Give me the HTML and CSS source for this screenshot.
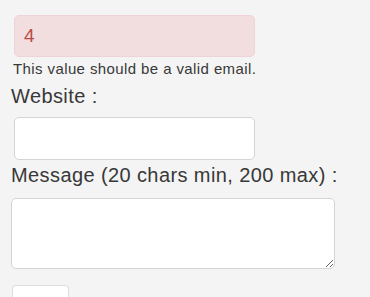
FILE: index.html
```html
<!DOCTYPE html>
<html>
<head>
<meta charset="utf-8">
<link rel="stylesheet" href="styles.css">
</head>
<body>
<form class="form">
  <input class="field field-error" type="text" value="4">
  <div class="error-msg">This value should be a valid email.</div>
  <label class="label">Website :</label>
  <input class="field" type="text">
  <label class="label label-msg">Message (20 chars min, 200 max) :</label>
  <textarea class="area"></textarea>
  <button class="btn" type="button"></button>
</form>
</body>
</html>
```
FILE: styles.css
```css
html, body {
  margin: 0;
  padding: 0;
  background: #f4f4f4;
  overflow: hidden;
}
.form {
  display: flex;
  flex-direction: column;
  align-items: flex-start;
  padding: 15px 0 0 11px;
  font-family: "Liberation Sans", Arial, sans-serif;
  color: #383838;
}
.field {
  box-sizing: border-box;
  width: 241px;
  height: 43px;
  margin: 0 0 0 3px;
  padding: 0 9px;
  border: 1px solid #d4d4d4;
  border-radius: 5px;
  background: #fff;
  font-family: "Liberation Sans", Arial, sans-serif;
  font-size: 19px;
  color: #555;
  outline: none;
}
.field-error {
  height: 42px;
  background: #f2dede;
  border-color: #eed3d7;
  color: #b94a48;
}
.error-msg {
  margin: 4px 0 0 2px;
  font-size: 15px;
  letter-spacing: 0.4px;
  line-height: 16px;
}
.label {
  margin: 8px 0 0 0;
  font-size: 20px;
  letter-spacing: 0.4px;
  line-height: 22px;
}
.label-msg {
  margin-top: 6px;
}
.field + .label-msg { margin-top: 4px; }
.label + .field { margin-top: 10px; }
.area {
  box-sizing: border-box;
  width: 324px;
  height: 71px;
  margin: 12px 0 0 0;
  border: 1px solid #d4d4d4;
  border-radius: 5px;
  background: #fff;
  resize: vertical;
  font-family: "Liberation Sans", Arial, sans-serif;
}
.btn {
  box-sizing: border-box;
  width: 57px;
  height: 12px;
  margin: 16px 0 0 1px;
  border: 1px solid #ddd;
  border-bottom: 0;
  border-radius: 4px 4px 0 0;
  background: #fff;
}
```
